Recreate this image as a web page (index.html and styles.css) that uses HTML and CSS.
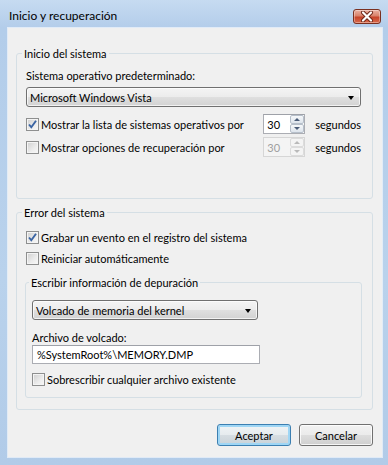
FILE: index.html
```html
<!DOCTYPE html>
<html lang="es">
<head>
    <meta charset="UTF-8">
    <title>Inicio y recuperación</title>
    <link rel="stylesheet" href="styles.css">
</head>
<body>
<div class="window">
    <div class="titlebar">
        <span class="title">Inicio y recuperación</span>
        <span class="close">
            <svg width="14" height="11" viewBox="0 0 14 11">
                <path d="M3 1.5 L11 9.5 M11 1.5 L3 9.5" stroke="#6b2416" stroke-width="4" stroke-linecap="round"/>
                <path d="M3 1.5 L11 9.5 M11 1.5 L3 9.5" stroke="#fff" stroke-width="2.2" stroke-linecap="round"/>
            </svg>
        </span>
    </div>

    <div class="client">
        <!-- Inicio del sistema -->
        <fieldset class="group first">
            <legend>Inicio del sistema</legend>
            <div class="label">Sistema operativo predeterminado:</div>
            <div class="combo"><span>Microsoft Windows Vista</span><i class="arrow"></i></div>

            <div class="timeouts">
                <label class="check"><span class="box"><svg width="11" height="11" viewBox="0 0 11 11"><path d="M2 5.5 L4.3 8.2 L9 1.8" fill="none" stroke="#3a64a3" stroke-width="1.9"/></svg></span>Mostrar la lista de sistemas operativos por</label>
                <div class="spin"><span>30</span><span class="spin-btns"><b class="up"></b><b class="down"></b></span></div>
                <span>segundos</span>

                <label class="check"><span class="box"></span>Mostrar opciones de recuperación por</label>
                <div class="spin disabled"><span>30</span><span class="spin-btns"><b class="up"></b><b class="down"></b></span></div>
                <span>segundos</span>
            </div>
        </fieldset>

        <!-- Error del sistema -->
        <fieldset class="group second">
            <legend>Error del sistema</legend>
            <div class="checks">
                <label class="check"><span class="box"><svg width="11" height="11" viewBox="0 0 11 11"><path d="M2 5.5 L4.3 8.2 L9 1.8" fill="none" stroke="#3a64a3" stroke-width="1.9"/></svg></span>Grabar un evento en el registro del sistema</label>
                <label class="check"><span class="box"></span>Reiniciar automáticamente</label>
            </div>

            <fieldset class="group inner">
                <legend>Escribir información de depuración</legend>
                <div class="combo short"><span>Volcado de memoria del kernel</span><i class="arrow"></i></div>
                <div class="label dump">Archivo de volcado:</div>
                <div class="textbox">%SystemRoot%\MEMORY.DMP</div>
                <label class="check overwrite"><span class="box"></span>Sobrescribir cualquier archivo existente</label>
            </fieldset>
        </fieldset>

        <div class="buttons">
            <button class="btn default">Aceptar</button>
            <button class="btn">Cancelar</button>
        </div>
    </div>
</div>
</body>
</html>
```

FILE: styles.css
```css
body {
    margin: 0;
    font-family: Lato, "Noto Sans", sans-serif;
    font-size: 11px;
    color: #000;
}

.window {
    width: 388px;
    height: 465px;
    display: flex;
    flex-direction: column;
    background: linear-gradient(to bottom, #c6dbf1 0, #b3cdea 28px, #b9d2ec 60%, #b1cbe8 100%);
}

.titlebar {
    height: 28px;
    flex: none;
    display: flex;
    justify-content: space-between;
    align-items: flex-start;
    padding: 0 7px 0 9px;
}

.title {
    margin-top: 8px;
    line-height: 15px;
    font-size: 12px;
}

.close {
    margin-top: 9px;
    width: 26px;
    height: 13px;
    border: 1px solid #7a3020;
    border-radius: 3px;
    display: flex;
    align-items: center;
    justify-content: center;
    background: linear-gradient(to bottom, #eab1a2 0%, #d9826b 45%, #c6442a 55%, #d86a4c 100%);
    box-shadow: inset 0 0 0 1px rgba(255, 255, 255, 0.35);
}

.client {
    flex: 1;
    margin: 0 6px 8px 8px;
    padding: 18px 9px 0 8px;
    background: #f0f0f0;
    box-shadow: 0 0 0 1px rgba(255, 255, 255, 0.6);
}

/* group boxes */
.group {
    margin: 0;
    min-width: 0;
    border: 1px solid #d5dfe5;
    border-radius: 3px;
    padding: 7px 11px 41px 9px;
}

.group legend {
    padding: 0 2px;
    margin-left: -4px;
    line-height: 15px;
}

.second {
    margin-top: 6px;
    padding: 9px 11px 11px 9px;
}

.inner {
    margin: 8px -1px 0 -1px;
    padding: 10px 6px 9px 6px;
}

.inner legend {
    margin-left: -3px;
}

.label {
    line-height: 15px;
    margin-bottom: 4px;
}

.label.dump {
    margin: 10px 0 0;
}

/* combo boxes */
.combo {
    height: 20px;
    box-sizing: border-box;
    border: 1px solid #707070;
    border-radius: 3px;
    background: linear-gradient(to bottom, #f4f4f4 0%, #ececec 50%, #dfdfdf 51%, #d2d2d2 100%);
    box-shadow: inset 0 0 0 1px rgba(255, 255, 255, 0.7);
    display: flex;
    align-items: center;
    justify-content: space-between;
    padding: 0 6px 0 3px;
}

.combo.short {
    width: 226px;
}

.arrow {
    width: 0;
    height: 0;
    border-left: 3.5px solid transparent;
    border-right: 3.5px solid transparent;
    border-top: 4px solid #000;
    margin-top: 1px;
}

/* timeouts */
.timeouts {
    margin-top: 7px;
    display: grid;
    grid-template-columns: minmax(0, 1fr) 42px auto;
    grid-auto-rows: 20px;
    column-gap: 10px;
    row-gap: 3px;
    align-items: center;
}

.spin {
    height: 20px;
    box-sizing: border-box;
    border: 1px solid #abadb3;
    border-top-color: #9ea1a8;
    background: #fff;
    display: flex;
    justify-content: space-between;
    align-items: center;
    padding-left: 3px;
}

.spin-btns {
    width: 14px;
    height: 18px;
    display: flex;
    flex-direction: column;
}

.spin-btns b {
    flex: 1;
    box-sizing: border-box;
    border: 1px solid #b6bfca;
    border-radius: 2px;
    background: linear-gradient(to bottom, #f6f8fa, #dde4ec);
    display: flex;
    align-items: center;
    justify-content: center;
}

.spin-btns b::after {
    content: "";
    width: 0;
    height: 0;
    border-left: 3px solid transparent;
    border-right: 3px solid transparent;
}

.spin-btns .up::after {
    border-bottom: 3px solid #4a5c78;
}

.spin-btns .down::after {
    border-top: 3px solid #4a5c78;
}

.spin.disabled {
    background: #f4f4f4;
    border-color: #d6d6d6;
    color: #9f9f9f;
}

.spin.disabled .spin-btns b {
    border-color: #dcdcdc;
    background: #f4f4f4;
}

.spin.disabled .up::after {
    border-bottom-color: #b9b9b9;
}

.spin.disabled .down::after {
    border-top-color: #b9b9b9;
}

/* check boxes */
.check {
    display: flex;
    align-items: center;
    gap: 2px;
    line-height: 17px;
    white-space: nowrap;
}

.box {
    flex: none;
    width: 13px;
    height: 13px;
    box-sizing: border-box;
    border: 1px solid #8e8f8f;
    background: linear-gradient(135deg, #cfcfcf 0%, #ececec 60%, #f8f8f8 100%);
    box-shadow: inset 0 0 0 1px #f4f4f4;
    display: flex;
    align-items: center;
    justify-content: center;
}

.checks {
    display: flex;
    flex-direction: column;
    gap: 4px;
}

.check.overwrite {
    margin-top: 7px;
}

/* text box */
.textbox {
    width: 228px;
    height: 19px;
    box-sizing: border-box;
    border: 1px solid #abadb3;
    border-top-color: #9ea1a8;
    background: #fff;
    padding-left: 4px;
    line-height: 17px;
}

/* buttons */
.buttons {
    margin-top: 14px;
    display: flex;
    justify-content: flex-end;
    gap: 8px;
}

.btn {
    width: 74px;
    height: 22px;
    font-family: inherit;
    font-size: inherit;
    color: #000;
    border: 1px solid #707070;
    border-radius: 3px;
    background: linear-gradient(to bottom, #f2f2f2 0%, #ebebeb 50%, #dddddd 51%, #cfcfcf 100%);
    box-shadow: inset 0 0 0 1px rgba(255, 255, 255, 0.8);
    padding: 0;
}

.btn.default {
    border-color: #3c7fb1;
    background: linear-gradient(to bottom, #f0f4f6 0%, #e6ebee 50%, #d6dde2 51%, #c8d2d8 100%);
    box-shadow: inset 0 0 0 2px #9fd6f5;
}
```
